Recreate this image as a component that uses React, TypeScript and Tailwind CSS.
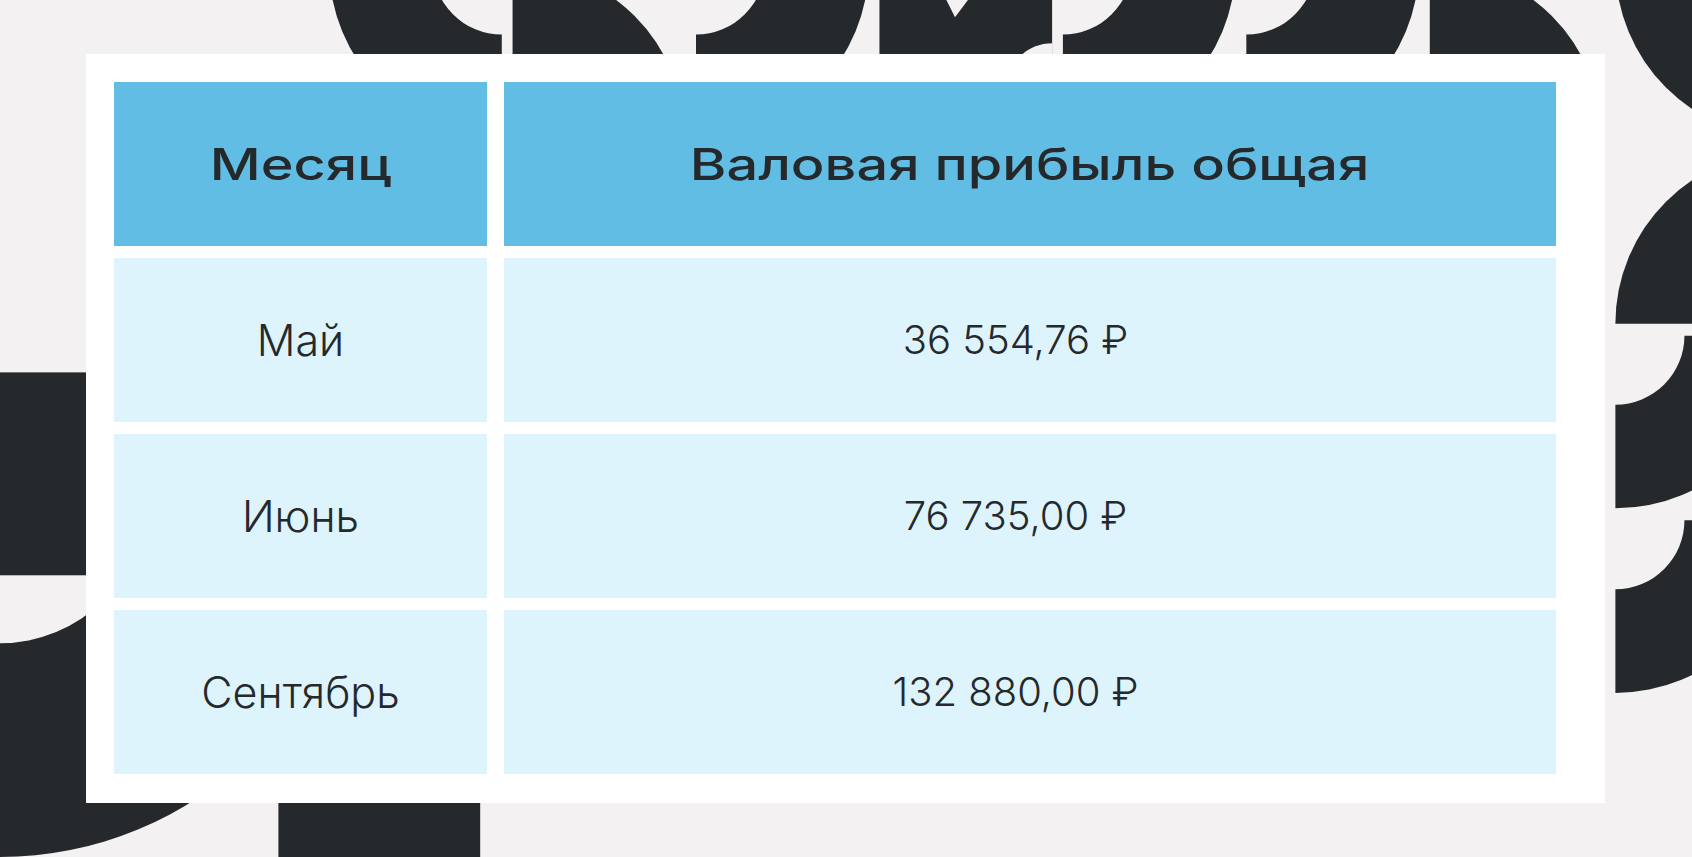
import React from 'react';

const rows = [
  { month: 'Май', profit: '36 554,76 ₽' },
  { month: 'Июнь', profit: '76 735,00 ₽' },
  { month: 'Сентябрь', profit: '132 880,00 ₽' },
];

// quarter ring: centre cx,cy, inner r, outer R, quadrant
const ringLL = (cx: number, cy: number, r: number, R: number) =>
  `M${cx},${cy + r} L${cx},${cy + R} A${R},${R} 0 0 1 ${cx - R},${cy} L${cx - r},${cy} A${r},${r} 0 0 0 ${cx},${cy + r} Z`;
const ringLR = (cx: number, cy: number, r: number, R: number) =>
  `M${cx},${cy + r} L${cx},${cy + R} A${R},${R} 0 0 0 ${cx + R},${cy} L${cx + r},${cy} A${r},${r} 0 0 1 ${cx},${cy + r} Z`;
const discUR = (cx: number, cy: number, R: number) =>
  `M${cx},${cy} L${cx},${cy - R} A${R},${R} 0 0 1 ${cx + R},${cy} Z`;
const discUL = (cx: number, cy: number, R: number) =>
  `M${cx},${cy} L${cx - R},${cy} A${R},${R} 0 0 1 ${cx},${cy - R} Z`;

const Pattern = () => (
  <svg
    className="absolute inset-0 w-full h-full"
    viewBox="0 0 1568 794"
    preserveAspectRatio="none"
  >
    <g fill="#25292c">
      <path d={ringLL(465, -32, 64, 160)} />
      <path d={discUR(475, 128, 160)} />
      <path d={ringLR(645, -32, 64, 160)} />
      <rect x="815" y="-32" width="160" height="160" />
      <path d={ringLR(985, -32, 64, 160)} />
      <path d={ringLR(1155, -32, 64, 160)} />
      <path d={discUR(1325, 128, 160)} />
      <path d={ringLL(1657, -32, 64, 160)} />
      <path d={discUL(1657, 300, 160)} />
      <path d={ringLR(1497, 311, 64, 160)} />
      <path d={ringLR(1497, 482, 64, 160)} />
      <rect x="-10" y="345" width="210" height="188" />
      <path d={ringLR(0, 460, 136, 334)} />
      <rect x="258" y="700" width="187" height="110" />
    </g>
    <g fill="#f3f1f2">
      <polygon points="877,0 897,0 885,16" />
      <path d={discUL(975, 82, 42)} />
    </g>
  </svg>
);

export default function App() {
  return (
    <div className="relative w-[1692px] h-[857px] overflow-hidden bg-[#f3f1f2] font-['Inter',sans-serif] text-[#25292c]">
      <Pattern />
      <div className="relative pt-[54px] pl-[86px]">
        <div className="w-[1519px] bg-white pt-[28px] pl-[28px] pr-[49px] pb-[29px] grid grid-cols-[373px_1052px] auto-rows-[164px] gap-x-[17px] gap-y-[12px]">
          <div className="bg-[#62bde4] flex items-center justify-center">
            <span className="inline-block scale-x-[1.27] text-[44px] leading-none font-medium">Месяц</span>
          </div>
          <div className="bg-[#62bde4] flex items-center justify-center">
            <span className="inline-block scale-x-[1.27] text-[44px] leading-none font-medium">Валовая прибыль общая</span>
          </div>
          {rows.map((r) => (
            <React.Fragment key={r.month}>
              <div className="bg-[#ddf4fc] flex items-center justify-center">
                <span className="text-[43px] leading-none font-light">{r.month}</span>
              </div>
              <div className="bg-[#ddf4fc] flex items-center justify-center pr-[29px]">
                <span className="text-[40px] leading-none font-light">{r.profit}</span>
              </div>
            </React.Fragment>
          ))}
        </div>
      </div>
    </div>
  );
}
